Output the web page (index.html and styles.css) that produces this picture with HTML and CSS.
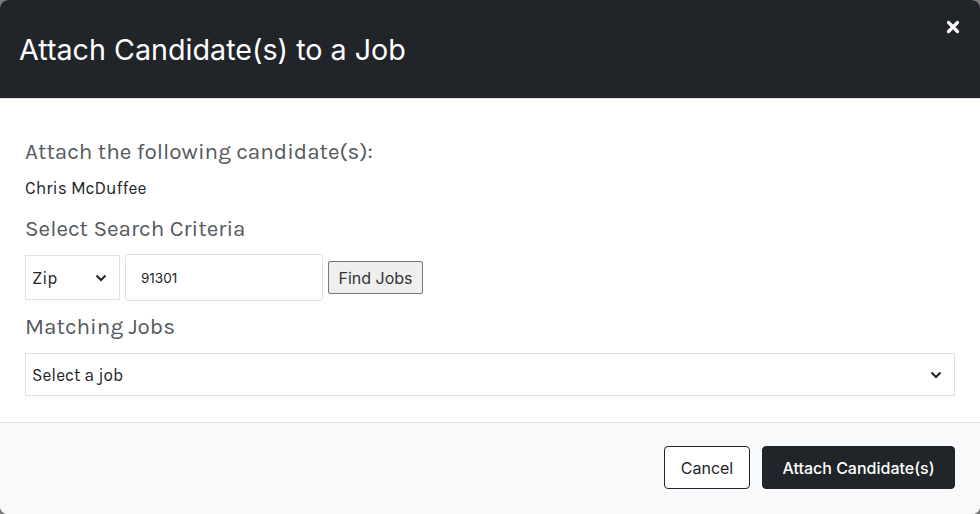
FILE: index.html
```html
<!DOCTYPE html>
<html>
<head>
<meta charset="utf-8">
<link rel="stylesheet" href="styles.css">
</head>
<body>
<div class="modal">
  <div class="modal-header">
    <h1 class="title">Attach Candidate(s) to a Job</h1>
    <button class="close" aria-label="Close">
      <svg width="14" height="14" viewBox="0 0 14 14"><path d="M2.5 2.5 L11.5 11.5 M11.5 2.5 L2.5 11.5" stroke="#fff" stroke-width="3.2" stroke-linecap="round"/></svg>
    </button>
  </div>
  <div class="modal-body">
    <h2 class="label">Attach the following candidate(s):</h2>
    <div class="name">Chris McDuffee</div>
    <h2 class="label">Select Search Criteria</h2>
    <div class="criteria">
      <div class="select small">
        <span>Zip</span>
        <svg class="chev" width="12" height="8" viewBox="0 0 12 8"><path d="M1.5 1.5 L6 6 L10.5 1.5" fill="none" stroke="#212529" stroke-width="2"/></svg>
      </div>
      <div class="input">91301</div>
      <button class="find">Find Jobs</button>
    </div>
    <h2 class="label">Matching Jobs</h2>
    <div class="select wide">
      <span>Select a job</span>
      <svg class="chev" width="12" height="8" viewBox="0 0 12 8"><path d="M1.5 1.5 L6 6 L10.5 1.5" fill="none" stroke="#212529" stroke-width="2"/></svg>
    </div>
  </div>
  <div class="modal-footer">
    <button class="btn outline">Cancel</button>
    <button class="btn dark">Attach Candidate(s)</button>
  </div>
</div>
</body>
</html>
```
FILE: styles.css
```css
html, body {
  margin: 0;
  padding: 0;
  background: #7a7a7a;
  width: 980px;
  height: 514px;
  overflow: hidden;
}
.modal {
  width: 980px;
  height: 514px;
  background: #fff;
  border-radius: 8px;
  overflow: hidden;
  display: flex;
  flex-direction: column;
  font-family: "Karla", "Noto Sans", sans-serif;
}
.modal-header {
  background: #212529;
  height: 99px;
  flex: none;
  border-bottom: 1px solid #dee2e6;
  display: flex;
  align-items: center;
  justify-content: space-between;
  padding: 0 19px;
  box-sizing: border-box;
  position: relative;
}
.title {
  margin: 0;
  color: #fff;
  font-family: "Inter", sans-serif;
  font-weight: 400;
  font-size: 28.7px;
}
.close {
  position: absolute;
  top: 20px;
  right: 20px;
  background: none;
  border: 0;
  padding: 0;
  width: 14px;
  height: 14px;
  display: flex;
}
.modal-body {
  flex: 1;
  padding: 39px 25px 0 25px;
  display: flex;
  flex-direction: column;
}
.label {
  margin: 0;
  font-weight: 400;
  font-size: 22.5px;
  line-height: 28px;
  color: #555a5e;
}
.name {
  font-size: 17.4px;
  color: #212529;
  margin: 11px 0 16px;
  line-height: 22px;
}
.criteria {
  display: flex;
  align-items: center;
  gap: 5px;
  margin: 11px 0 12px;
}
.select {
  border: 1px solid #dee2e6;
  background: #fff;
  display: flex;
  align-items: center;
  justify-content: space-between;
  box-sizing: border-box;
  color: #212529;
  font-size: 17.3px;
  padding: 0 12px 0 6px;
}
.select.small {
  width: 95px;
  height: 45px;
}
.select.wide {
  width: 930px;
  height: 43px;
  margin-top: 12px;
}
.input {
  width: 198px;
  height: 47px;
  border: 1px solid #dee2e6;
  border-radius: 3px;
  box-sizing: border-box;
  display: flex;
  align-items: center;
  padding-left: 15px;
  font-size: 13.5px;
  color: #212529;
  font-family: "Inter", sans-serif;
}
.find {
  height: 33px;
  width: 95px;
  padding: 0;
  background: #efefef;
  border: 1px solid #767676;
  border-radius: 2px;
  font-family: "Inter", sans-serif;
  font-size: 16px;
  color: #333;
}
.modal-footer {
  height: 92px;
  flex: none;
  box-sizing: border-box;
  background: #f8f9fa;
  border-top: 1px solid #dee2e6;
  display: flex;
  justify-content: flex-end;
  align-items: center;
  gap: 12px;
  padding: 0 25px 2px;
}
.btn {
  height: 43px;
  border-radius: 4px;
  font-family: "Inter", sans-serif;
  font-size: 16px;
  padding: 0;
  box-sizing: border-box;
}
.btn.outline {
  background: #fff;
  border: 1px solid #212529;
  color: #212529;
  width: 86px;
}
.btn.dark {
  background: #212529;
  border: 1px solid #212529;
  color: #fff;
  width: 193px;
  font-weight: 500;
}
```
